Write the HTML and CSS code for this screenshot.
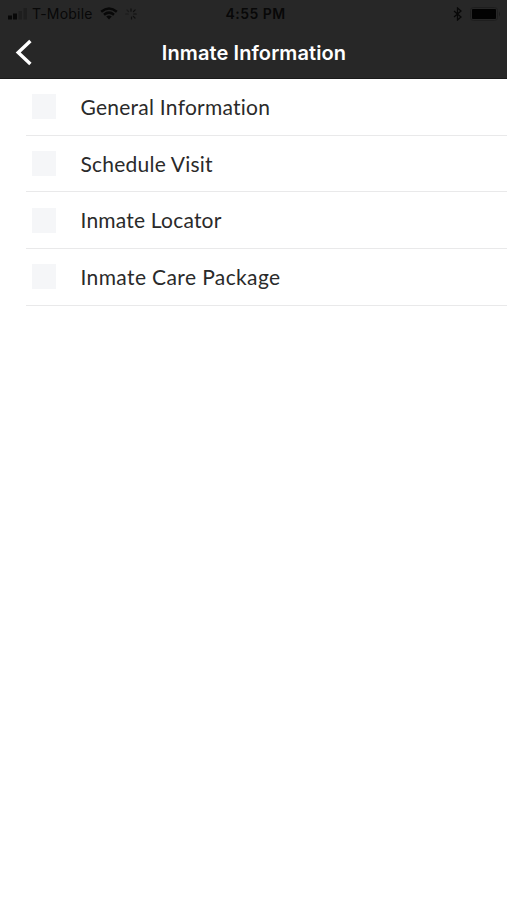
FILE: index.html
```html
<!DOCTYPE html>
<html lang="en">
<head>
<meta charset="utf-8">
<meta name="viewport" content="width=device-width, initial-scale=1">
<title>Inmate Information</title>
<link rel="stylesheet" href="styles.css">
</head>
<body>
<header class="header">
  <div class="status">
    <div class="status-left">
      <svg class="signal" width="20" height="12" viewBox="0 0 20 12"><path d="M0 7.500h4v4H0zM5 5.500h4v6H5z" fill="#080808"/><path d="M10.500 3h3.500v8.500h-3.500zM15.500 0h3.500v11.500h-3.500z" fill="#1e1e1e"/></svg>
      <span class="carrier">T-Mobile</span>
      <svg class="wifi" width="18" height="13" viewBox="0 0 18 13" fill="none" stroke="#080808" stroke-width="2.500"><path d="M1.200 4.700Q9-1.800 16.800 4.700M4 7.700Q9 3.600 14 7.700"/><path d="M6.200 9.500Q9 7.400 11.800 9.500L9 12.500z" fill="#080808" stroke="none"/></svg>
      <svg class="spinner" width="12" height="12" viewBox="0 0 12 12" fill="none" stroke-width="1.200" stroke-linecap="round"><path d="M6 .8v2.400M8.500 3.500l1.700-1.700M8.800 6h2.400M8.300 8.300l1.700 1.700M6.500 9v2" stroke="#101010"/><path d="M3.500 3.500L2 2M.8 6h2.400" stroke="#1a1a1a"/></svg>
    </div>
    <span class="time">4:55 PM</span>
    <div class="status-right">
      <svg class="bluetooth" width="9" height="14" viewBox="0 0 9 14" fill="none" stroke="#080808" stroke-width="1.300"><path d="M1 4l7 6-3.500 3V1L8 4l-7 6"/></svg>
      <svg class="battery" width="31" height="14" viewBox="0 0 31 14"><rect x=".5" y=".5" width="27" height="13" rx="3" fill="none" stroke="#1e1e1e"/><rect x="2" y="2" width="24" height="10" rx="1" fill="#020202"/><path d="M29 4.500q2 2.500 0 5z" fill="#1b1b1b"/></svg>
    </div>
  </div>
  <div class="nav">
    <svg class="back" width="20" height="30" viewBox="0 0 20 30" fill="none" stroke="#fff" stroke-width="3.400"><path d="M16.400 3L4.200 14.500l12.200 11.500"/></svg>
    <h1 class="title">Inmate Information</h1>
  </div>
</header>
<main class="list">
  <a class="row"><span class="thumb"></span><span class="label general">General Information</span></a>
  <a class="row"><span class="thumb"></span><span class="label visit">Schedule Visit</span></a>
  <a class="row"><span class="thumb"></span><span class="label locator">Inmate Locator</span></a>
  <a class="row"><span class="thumb"></span><span class="label package">Inmate Care Package</span></a>
</main>
</body>
</html>
```
FILE: styles.css
```css
* { box-sizing: border-box; }
body { margin: 0; min-height: 900px; background: #fff; font-family: Lato, sans-serif; }
svg { display: block; flex: none; }
.header { height: 79px; background: #272727; border-bottom: 1px solid #1a1a1a; }
.status { height: 27px; display: grid; grid-template-columns: 1fr auto 1fr; align-items: center; padding: 0 6px 0 8px; font-family: Inter, sans-serif; font-size: 14px; line-height: 20px; color: #080808; }
.status-left, .status-right { display: flex; align-items: center; }
.status-right { justify-content: flex-end; gap: 8px; }
.carrier { margin-left: 4px; width: 61px; white-space: nowrap; letter-spacing: .2px; }
.wifi { margin-left: 7px; }
.spinner { margin-left: 7px; }
.time { font-weight: 600; letter-spacing: .45px; padding-left: 2px; }
.nav { height: 51px; display: grid; grid-template-columns: 44px 1fr 43px; align-items: center; }
.back { margin-left: 14px; }
.title { margin: 0; text-align: center; font: 600 20px/28px Inter, sans-serif; letter-spacing: .1px; color: #fff; white-space: nowrap; }
.list { padding-left: 26px; }
.row { height: 56.7px; display: flex; align-items: center; padding-left: 6px; border-bottom: 1px solid #e9e9ea; }
.thumb { width: 24px; height: 25px; margin-right: 24.5px; background: #f5f6f8; }
.label { font-size: 21px; line-height: 28px; color: #2a2a2a; white-space: nowrap; font-variant-ligatures: none; }
.general { letter-spacing: .25px; }
.visit { letter-spacing: .22px; }
.locator { letter-spacing: .2px; }
.package { letter-spacing: .38px; }
```
